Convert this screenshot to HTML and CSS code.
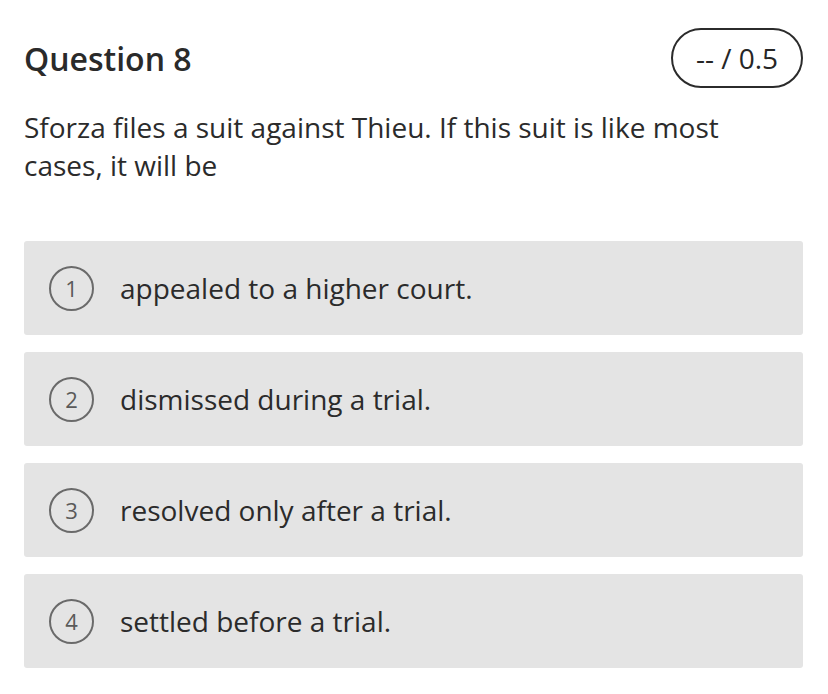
FILE: index.html
```html
<!DOCTYPE html>
<html>
<head>
<meta charset="utf-8">
<link rel="stylesheet" href="styles.css">
</head>
<body>
<div class="page">
  <div class="header">
    <h1 class="title">Question 8</h1>
    <div class="score">-- / 0.5</div>
  </div>
  <p class="prompt">Sforza files a suit against Thieu. If this suit is like most cases, it will be</p>
  <div class="options">
    <div class="option"><span class="num">1</span><span class="label">appealed to a higher court.</span></div>
    <div class="option"><span class="num">2</span><span class="label">dismissed during a trial.</span></div>
    <div class="option"><span class="num">3</span><span class="label">resolved only after a trial.</span></div>
    <div class="option"><span class="num">4</span><span class="label">settled before a trial.</span></div>
  </div>
</div>
</body>
</html>
```
FILE: styles.css
```css
html, body {
  margin: 0;
  padding: 0;
  background: #ffffff;
}
body {
  font-family: "Open Sans", "Noto Sans", sans-serif;
  color: #2b2b2b;
}
.page {
  padding: 28px 25px 0 24px;
}
.header {
  display: flex;
  justify-content: space-between;
  align-items: center;
  height: 60px;
}
.title {
  margin: 0;
  font-size: 32px;
  font-weight: 600;
  color: #2a2a2a;
}
.score {
  box-sizing: border-box;
  width: 132px;
  height: 60px;
  border: 2px solid #2b2b2b;
  border-radius: 30px;
  display: flex;
  align-items: center;
  justify-content: center;
  font-size: 28px;
  color: #262626;
}
.prompt {
  margin: 20px 0 0 0;
  font-size: 28px;
  line-height: 38px;
  color: #2b2b2b;
  max-width: 740px;
}
.options {
  margin-top: 57px;
  display: flex;
  flex-direction: column;
  gap: 17px;
}
.option {
  height: 94px;
  background: #e4e4e4;
  border-radius: 3px;
  display: flex;
  align-items: center;
  padding-left: 25px;
}
.num {
  box-sizing: border-box;
  width: 45px;
  height: 45px;
  border: 2px solid #6a6a6a;
  border-radius: 50%;
  display: flex;
  align-items: center;
  justify-content: center;
  font-size: 22px;
  font-weight: 500;
  color: #5a5a5a;
  flex-shrink: 0;
}
.label {
  margin-left: 26px;
  font-size: 28px;
  color: #2b2b2b;
}
```
